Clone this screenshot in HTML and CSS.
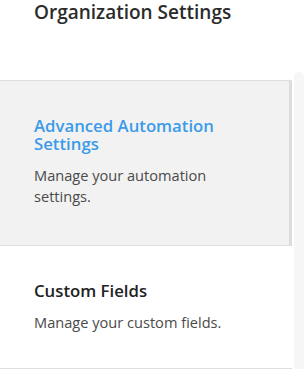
FILE: index.html
```html
<!DOCTYPE html>
<html lang="en">
  <head>
    <meta charset="utf-8" />
    <title>Organization Settings</title>
    <link rel="stylesheet" href="styles.css">
  </head>
  <body>
    <h1 class="page-title">Organization Settings</h1>

    <div class="panel">
      <ul class="settings-list">
        <li class="settings-item active">
          <h2 class="item-title">Advanced Automation Settings</h2>
          <p class="item-desc">Manage your automation settings.</p>
        </li>
        <li class="settings-item">
          <h2 class="item-title">Custom Fields</h2>
          <p class="item-desc">Manage your custom fields.</p>
        </li>
      </ul>
      <div class="scrollbar"></div>
    </div>
  </body>
</html>
```

FILE: styles.css
```css
html {
  font-family: "Open Sans", sans-serif;
}

body {
  margin: 0;
  background: #fff;
  color: #333;
}

.page-title {
  margin: 0 0 0 34px;
  font-size: 19px;
  line-height: 25px;
  font-weight: 600;
  color: #2b2b2b;
}

.panel {
  display: flex;
  gap: 2px;
  margin-top: 47px;
}

.settings-list {
  flex: 1;
  list-style: none;
  margin: 8px 0 0 0;
  padding: 0;
  border-top: 1px solid #dedede;
}

.settings-item {
  padding: 36px 34px;
  border-bottom: 1px solid #dedede;
  display: flex;
  flex-direction: column;
  gap: 12px;
}

.settings-item.active {
  background-color: #f2f2f2;
  border-right: 3px solid #dcdcdc;
  padding-right: 31px;
  padding-bottom: 38px;
}

.item-title {
  margin: 0;
  font-size: 16.75px;
  line-height: 18px;
  font-weight: 600;
  color: #222;
}

.active .item-title {
  color: #3c9be8;
}

.item-desc {
  margin: 0;
  font-size: 14.6px;
  line-height: 20px;
  color: #4a4a4a;
}

.active .item-desc {
  line-height: 21px;
}

.scrollbar {
  width: 10px;
  background-color: #f6f6f6;
  border-radius: 5px 5px 0 0;
}
```
